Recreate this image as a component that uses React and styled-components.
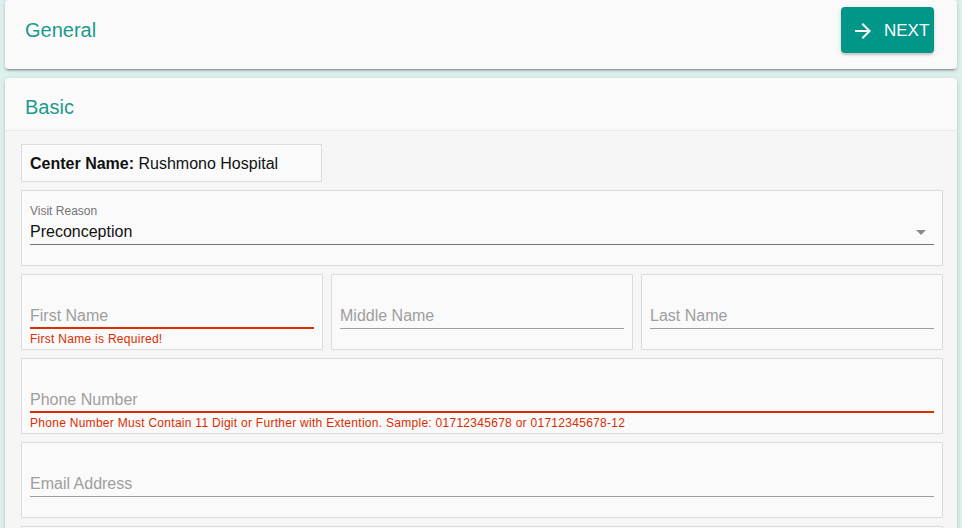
import styled, { createGlobalStyle } from "styled-components";

const GlobalStyle = createGlobalStyle`
  body {
    margin: 0;
    background: #ddf0ee;
    font-family: "Liberation Sans", Arial, sans-serif;
    overflow: hidden;
  }
`;

const Page = styled.div`
  padding: 0 5px;
  display: flex;
  flex-direction: column;
  gap: 9px;
`;

const Card = styled.div`
  background: #fafafa;
  border-radius: 4px;
  box-shadow: 0 2px 2px rgba(0, 0, 0, 0.14), 0 1px 5px rgba(0, 0, 0, 0.12),
    0 3px 1px -2px rgba(0, 0, 0, 0.2);
  overflow: hidden;
`;

const TopBar = styled.div`
  margin-top: -8px;
  height: 77px;
  display: flex;
  align-items: center;
  justify-content: space-between;
  padding: 0 23px 0 20px;
  box-sizing: border-box;
`;

const Title = styled.div`
  color: #1b9a8b;
  font-size: 20px;
`;

const NextButton = styled.button`
  display: flex;
  align-items: center;
  gap: 9px;
  height: 46px;
  width: 93px;
  padding: 1px 0 0 10px;
  margin-top: -1px;
  border: none;
  border-radius: 4px;
  background: #009688;
  color: #fff;
  font-family: inherit;
  font-size: 17px;
  box-shadow: 0 2px 2px rgba(0, 0, 0, 0.14), 0 1px 5px rgba(0, 0, 0, 0.12);
`;

const SectionHead = styled.div`
  height: 53px;
  display: flex;
  align-items: center;
  padding: 6px 20px 0;
  box-sizing: border-box;
  border-bottom: 1px solid #ececec;
`;

const Body = styled.div`
  background: #f6f6f6;
  padding: 13px 14px 12px 16px;
  display: flex;
  flex-direction: column;
  gap: 8px;
`;

const Row = styled.div`
  display: grid;
  grid-template-columns: repeat(3, 1fr);
  gap: 8px;
`;

const Box = styled.div`
  background: #fafafa;
  border: 1px solid #dcdcdc;
  box-sizing: border-box;
  padding: 0 8px;
  height: ${(p) => (p.$short ? "38px" : "76px")};
  width: ${(p) => (p.$short ? "301px" : "auto")};
`;

const CenterText = styled.div`
  font-size: 16px;
  color: #111;
  line-height: 37px;
  b {
    font-weight: bold;
  }
`;

const SelectLabel = styled.div`
  font-size: 12px;
  color: #757575;
  margin-top: 13px;
`;

const SelectValue = styled.div`
  display: flex;
  align-items: center;
  justify-content: space-between;
  font-size: 16px;
  color: #111;
  height: 27px;
  padding-top: 1px;
  border-bottom: 1px solid #757575;
  box-sizing: border-box;
  padding-right: 8px;
`;

const Caret = styled.span`
  width: 0;
  height: 0;
  border-left: 5px solid transparent;
  border-right: 5px solid transparent;
  border-top: 5px solid #8a8a8a;
  margin-top: 2px;
`;

const Input = styled.div`
  margin-top: 27px;
  height: 27px;
  box-sizing: border-box;
  display: flex;
  align-items: center;
  font-size: 16px;
  color: #9e9e9e;
  border-bottom: ${(p) => (p.$error ? "2px solid #dd2c00" : "1px solid #9e9e9e")};
  padding-top: ${(p) => (p.$error ? "3px" : "2px")};
`;

const Helper = styled.div`
  font-size: 12px;
  color: #dd2c00;
  margin-top: 3px;
  letter-spacing: 0.28px;
`;

function TextField({ label, error }) {
  return (
    <Box>
      <Input $error={!!error}>{label}</Input>
      {error && <Helper>{error}</Helper>}
    </Box>
  );
}

function ArrowIcon() {
  return (
    <svg width="24" height="24" viewBox="0 0 24 24" fill="#fff">
      <path d="M12 4l-1.41 1.41L16.17 11H4v2h12.17l-5.58 5.59L12 20l8-8z" />
    </svg>
  );
}

export default function App() {
  return (
    <>
      <GlobalStyle />
      <Page>
        <Card>
          <TopBar>
            <Title>General</Title>
            <NextButton>
              <ArrowIcon />
              NEXT
            </NextButton>
          </TopBar>
        </Card>
        <Card>
          <SectionHead>
            <Title>Basic</Title>
          </SectionHead>
          <Body>
            <Box $short>
              <CenterText>
                <b>Center Name:</b> Rushmono Hospital
              </CenterText>
            </Box>
            <Box>
              <SelectLabel>Visit Reason</SelectLabel>
              <SelectValue>
                Preconception
                <Caret />
              </SelectValue>
            </Box>
            <Row>
              <TextField label="First Name" error="First Name is Required!" />
              <TextField label="Middle Name" />
              <TextField label="Last Name" />
            </Row>
            <TextField
              label="Phone Number"
              error="Phone Number Must Contain 11 Digit or Further with Extention. Sample: 01712345678 or 01712345678-12"
            />
            <TextField label="Email Address" />
            <Box />
          </Body>
        </Card>
      </Page>
    </>
  );
}
